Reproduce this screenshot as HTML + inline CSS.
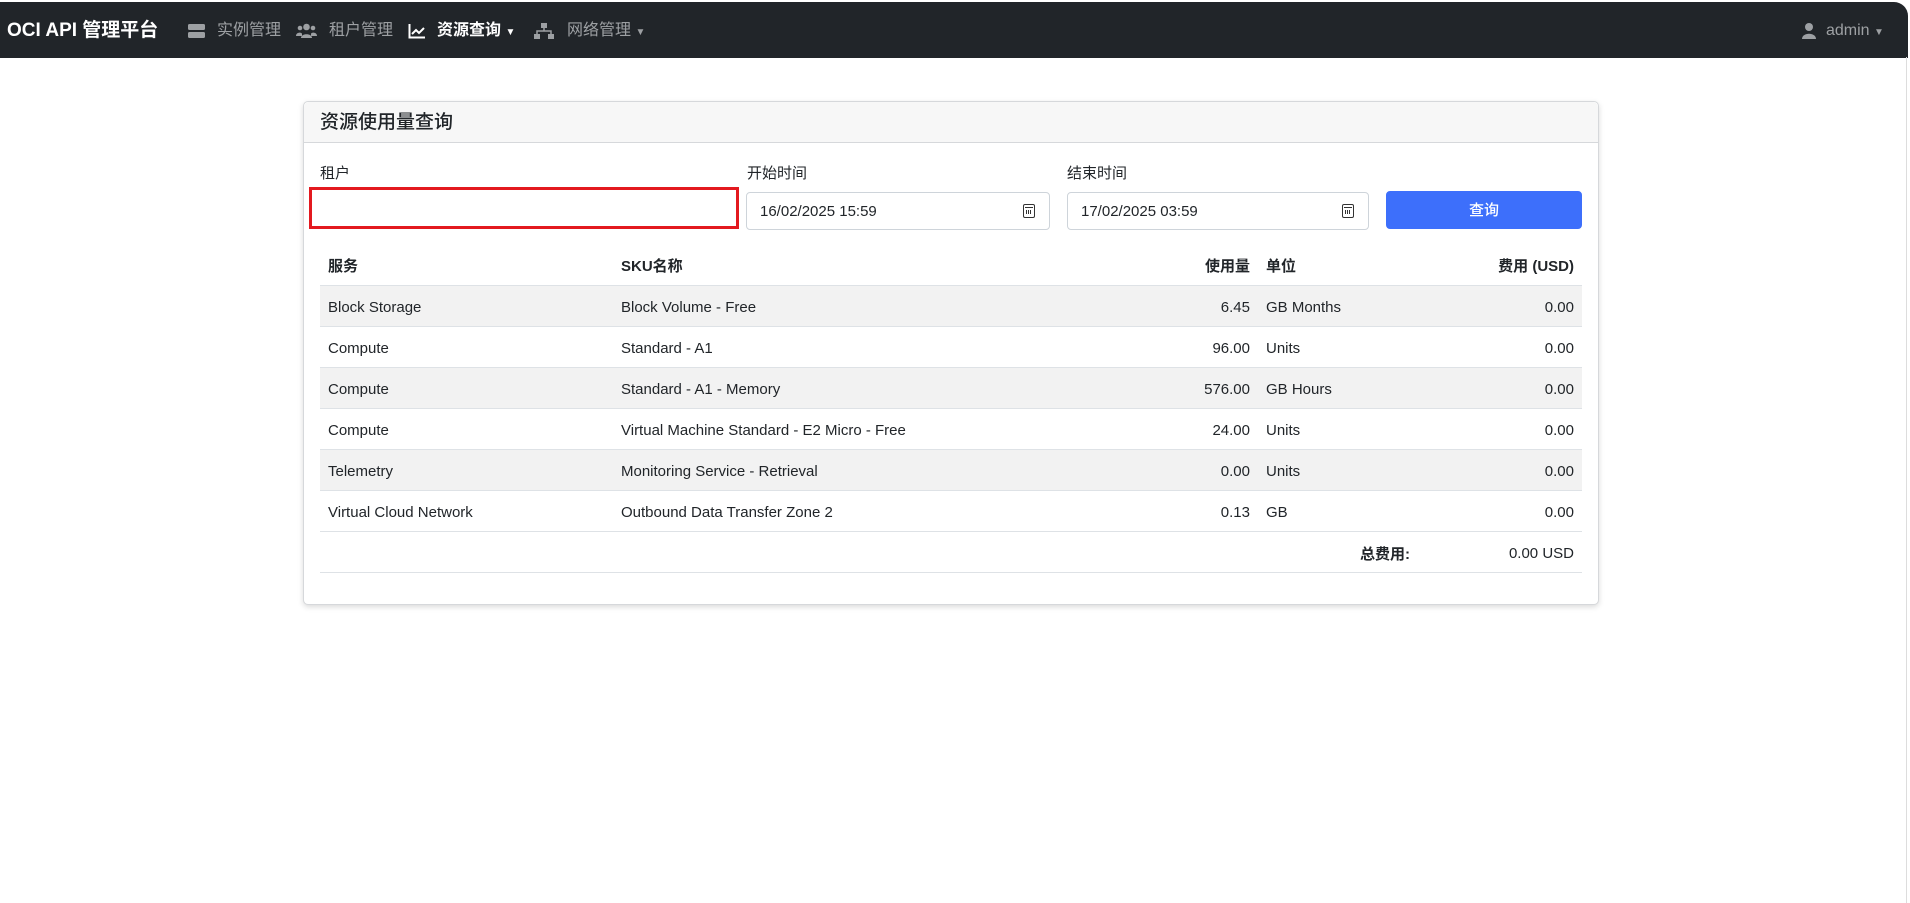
<!DOCTYPE html>
<html><head><meta charset="utf-8"><style>
*{box-sizing:border-box;margin:0;padding:0}
body{width:1910px;height:903px;background:#fff;font-family:"Liberation Sans","Noto Sans CJK SC",sans-serif;color:#212529;position:relative;overflow:hidden}
.nav{position:absolute;left:0;top:2px;width:1908px;height:56px;background:#212529;border-top-right-radius:14px}
.nav .t{position:absolute;top:1px;line-height:55px;font-size:16px;color:#9da0a3;white-space:nowrap}
.brand{left:7px;color:#fff!important;font-weight:bold;font-size:19px!important}
.ic{position:absolute}
.card{position:absolute;left:303px;top:101px;width:1296px;height:504px;border:1px solid #d6d8db;border-radius:5px;box-shadow:0 2px 6px rgba(0,0,0,.15);background:#fff}
.ch{height:41px;background:#f7f7f7;border-bottom:1px solid #d6d8db;border-radius:5px 5px 0 0;font-size:19px;line-height:42px;padding-left:16px;font-weight:500}
.lbl{position:absolute;font-size:15px;top:60px}
.inp{position:absolute;top:90px;height:38px;border:1px solid #ced4da;border-radius:4px;font-size:15px;line-height:37px;padding-left:13px}
.cal{position:absolute;right:14px;top:11px;width:12px;height:14px;border:1.5px solid #333;border-radius:2px}
.cal:before{content:"";position:absolute;left:1px;right:1px;top:2px;border-top:1.5px solid #333}
.cal:after{content:"";position:absolute;left:2px;top:5px;width:5px;height:4px;background:repeating-linear-gradient(90deg,#333 0 1px,transparent 1px 2px)}
table{position:absolute;left:16px;top:142px;width:1262px;border-collapse:collapse;font-size:15px}
td,th{height:41px;padding:3px 8px 0;text-align:left;border-bottom:1px solid #dee2e6}
th{font-weight:bold;border-bottom:1px solid #dee2e6}
tr.s td{background:#f2f2f2}
.r{text-align:right}
</style></head><body>
<div class="nav">
<div class="t brand">OCI API 管理平台</div>
<svg class="ic" style="left:188px;top:22px" width="17" height="15" viewBox="0 0 17 15"><rect x="0" y="0" width="17" height="6" rx="1.5" fill="#9da0a3"/><rect x="0" y="8" width="17" height="6" rx="1.5" fill="#9da0a3"/></svg>
<div class="t" style="left:217px">实例管理</div>
<svg class="ic" style="left:296px;top:21px" width="21" height="16" viewBox="0 0 21 16"><circle cx="10.5" cy="4" r="3.3" fill="#9da0a3"/><circle cx="4" cy="5" r="2.3" fill="#9da0a3"/><circle cx="17" cy="5" r="2.3" fill="#9da0a3"/><path d="M5 15c0-5 11-5 11 0z M0 13c0-4 6-4 6-2v2z M21 13c0-4-6-4-6-2v2z" fill="#9da0a3"/></svg>
<div class="t" style="left:329px">租户管理</div>
<svg class="ic" style="left:408px;top:22px" width="17" height="15" viewBox="0 0 17 15"><path d="M1.5 0v13.5H17" stroke="#fff" stroke-width="2" fill="none"/><path d="M4 10l4-4 3 3 5-5" stroke="#fff" stroke-width="2" fill="none"/></svg>
<div class="t" style="left:437px;color:#fff;font-weight:bold">资源查询 <span style="font-size:10px">▼</span></div>
<svg class="ic" style="left:534px;top:21px" width="20" height="17" viewBox="0 0 20 17"><rect x="7" y="0" width="6" height="5" fill="#9da0a3"/><rect x="0" y="11" width="6" height="5" fill="#9da0a3"/><rect x="14" y="11" width="6" height="5" fill="#9da0a3"/><path d="M10 5v3M3 11V8h14v3" stroke="#9da0a3" stroke-width="1.5" fill="none"/></svg>
<div class="t" style="left:567px">网络管理 <span style="font-size:10px">▼</span></div>
<svg class="ic" style="left:1802px;top:21px" width="14" height="16" viewBox="0 0 14 16"><circle cx="7" cy="4" r="4" fill="#9da0a3"/><path d="M0 16c0-7 14-7 14 0z" fill="#9da0a3"/></svg>
<div class="t" style="left:1826px">admin <span style="font-size:10px">▼</span></div>
</div>
<div style="position:absolute;left:1906px;top:57px;width:1px;height:846px;background:#ddd"></div>
<div class="card">
<div class="ch">资源使用量查询</div>
<div class="lbl" style="left:16px">租户</div>
<div class="lbl" style="left:443px">开始时间</div>
<div class="lbl" style="left:763px">结束时间</div>
<div class="inp" style="left:5px;top:85px;width:430px;height:42px;border:3px solid #e3191f;border-radius:0"></div>
<div class="inp" style="left:442px;width:304px">16/02/2025 15:59<span class="cal"></span></div>
<div class="inp" style="left:763px;width:302px">17/02/2025 03:59<span class="cal"></span></div>
<div class="inp" style="left:1082px;top:89px;width:196px;height:38px;background:#3d6ffb;border-color:#3d6ffb;color:#fff;text-align:center;padding:0;font-weight:500">查询</div>
<table>
<tr><th style="width:293px">服务</th><th style="width:440px">SKU名称</th><th class="r" style="width:205px">使用量</th><th style="width:160px">单位</th><th class="r">费用 (USD)</th></tr>
<tr class="s"><td>Block Storage</td><td>Block Volume - Free</td><td class="r">6.45</td><td>GB Months</td><td class="r">0.00</td></tr>
<tr><td>Compute</td><td>Standard - A1</td><td class="r">96.00</td><td>Units</td><td class="r">0.00</td></tr>
<tr class="s"><td>Compute</td><td>Standard - A1 - Memory</td><td class="r">576.00</td><td>GB Hours</td><td class="r">0.00</td></tr>
<tr><td>Compute</td><td>Virtual Machine Standard - E2 Micro - Free</td><td class="r">24.00</td><td>Units</td><td class="r">0.00</td></tr>
<tr class="s"><td>Telemetry</td><td>Monitoring Service - Retrieval</td><td class="r">0.00</td><td>Units</td><td class="r">0.00</td></tr>
<tr><td>Virtual Cloud Network</td><td>Outbound Data Transfer Zone 2</td><td class="r">0.13</td><td>GB</td><td class="r">0.00</td></tr>
<tr><td></td><td></td><td></td><td class="r" style="font-weight:bold">总费用:</td><td class="r">0.00 USD</td></tr>
</table>
</div>
</body></html>
